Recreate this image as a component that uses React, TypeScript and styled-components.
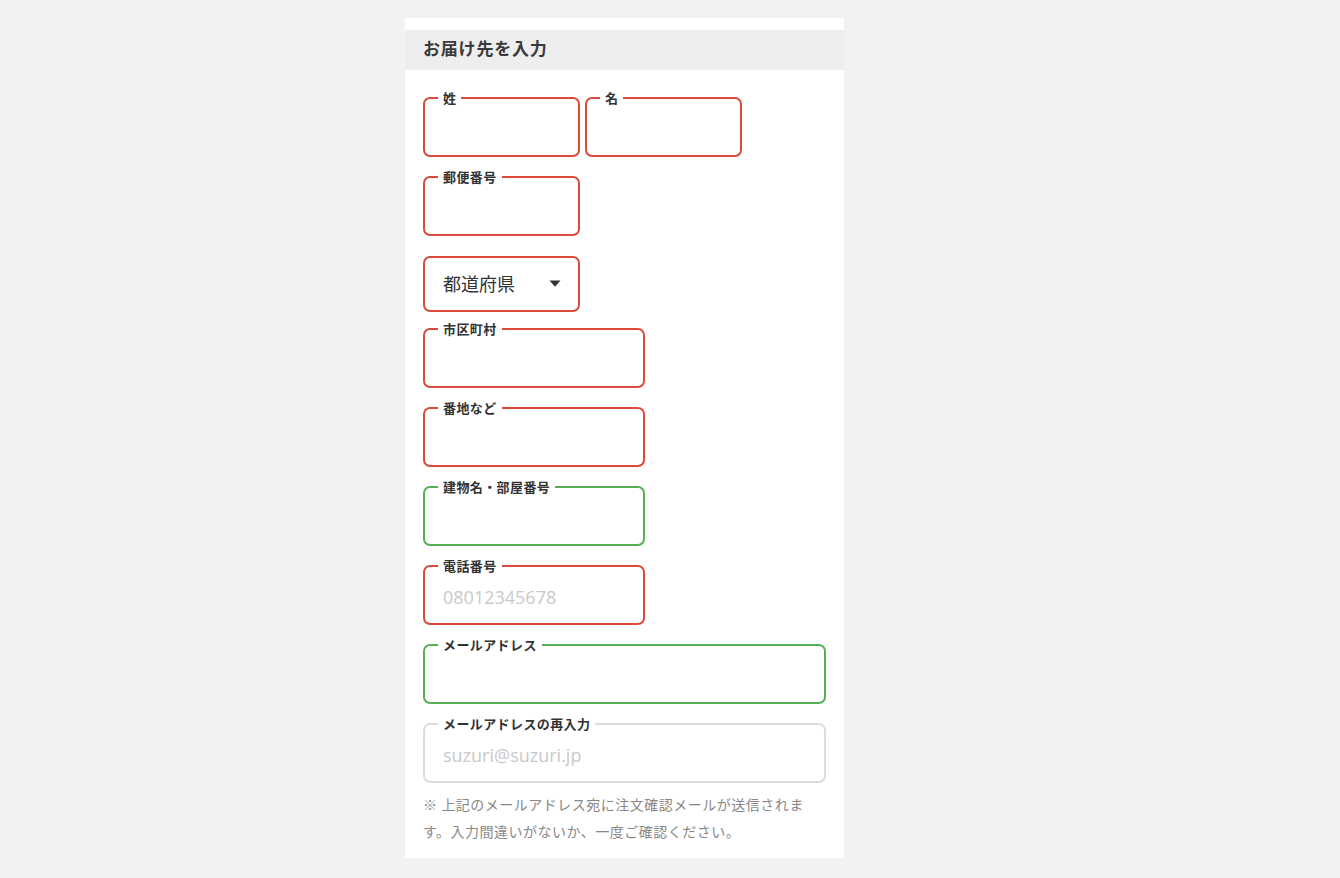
import styled, { createGlobalStyle } from 'styled-components';

const GlobalStyle = createGlobalStyle`
  html, body {
    margin: 0;
    padding: 0;
    background: #f2f2f2;
    font-family: "Noto Sans", "Open Sans", "Noto Sans CJK JP", sans-serif;
  }
`;

const RED = '#db4a3b';
const GREEN = '#55b055';
const GRAY = '#dcdcdc';

type Status = 'error' | 'ok' | 'idle';

const borderOf = (s: Status) => (s === 'error' ? RED : s === 'ok' ? GREEN : GRAY);

const Page = styled.div`
  min-height: 878px;
  padding: 18px 0 0 405px;
  box-sizing: border-box;
`;

const Panel = styled.section`
  width: 439px;
  background: #fff;
  padding-top: 12px;
  padding-bottom: 13px;
`;

const PanelHeader = styled.h2`
  margin: 0;
  height: 40px;
  box-sizing: border-box;
  display: flex;
  align-items: center;
  padding: 0 18px 6px;
  background: #eeeeee;
  font-family: "Noto Sans CJK JP", sans-serif;
  font-size: 17px;
  font-weight: 700;
  letter-spacing: 0.8px;
  color: #3a3a3a;
`;

const Form = styled.form`
  display: flex;
  flex-direction: column;
  gap: 13px;
  padding: 21px 18px 0;
`;

const Row = styled.div`
  display: flex;
  gap: 5px;
`;

const Field = styled.fieldset<{ $status: Status; $width: number }>`
  margin: 0;
  padding: 0 13px;
  width: ${(p) => p.$width}px;
  box-sizing: border-box;
  border: 2px solid ${(p) => borderOf(p.$status)};
  border-radius: 7px;
  min-inline-size: 0;
`;

const Legend = styled.legend`
  padding: 0 5px;
  font-family: "Noto Sans CJK JP", sans-serif;
  font-size: 13px;
  line-height: 14px;
  font-weight: 700;
  letter-spacing: 0.4px;
  color: #333;
`;

const Input = styled.input`
  display: block;
  width: 100%;
  height: 48px;
  margin-bottom: 2px;
  padding: 0 5px;
  box-sizing: border-box;
  border: none;
  outline: none;
  background: transparent;
  font-family: "Open Sans", "Noto Sans CJK JP", sans-serif;
  font-size: 18px;
  color: #333;
  &::placeholder {
    color: #c9c9c9;
  }
`;

const SelectBox = styled.div`
  width: 157px;
  height: 56px;
  margin: 7px 0 -3px;
  box-sizing: border-box;
  border: 2px solid ${RED};
  border-radius: 7px;
  display: flex;
  align-items: center;
  justify-content: space-between;
  padding: 0 17px 2px 18px;
  font-family: "Noto Sans CJK JP", sans-serif;
  font-size: 18px;
  color: #333;
`;

const Footnote = styled.div`
  padding: 0 18px;
`;

const Note = styled.p`
  margin: 8px 0 0;
  font-family: "Noto Sans CJK JP", sans-serif;
  font-size: 14px;
  line-height: 27px;
  letter-spacing: 0.5px;
  color: #888;
`;

const Caret = () => (
  <svg width="12" height="7" viewBox="0 0 12 7">
    <path d="M0.5 0.5 H11.5 L6 6.8 Z" fill="#333" />
  </svg>
);

type TextFieldProps = {
  label: string;
  status: Status;
  width: number;
  placeholder?: string;
};

const TextField = ({ label, status, width, placeholder }: TextFieldProps) => (
  <Field $status={status} $width={width}>
    <Legend>{label}</Legend>
    <Input placeholder={placeholder} />
  </Field>
);

const App = () => (
  <Page>
    <GlobalStyle />
    <Panel>
      <PanelHeader>お届け先を入力</PanelHeader>
      <Form onSubmit={(e) => e.preventDefault()}>
        <Row>
          <TextField label="姓" status="error" width={157} />
          <TextField label="名" status="error" width={157} />
        </Row>
        <TextField label="郵便番号" status="error" width={157} />
        <SelectBox>
          <span>都道府県</span>
          <Caret />
        </SelectBox>
        <TextField label="市区町村" status="error" width={222} />
        <TextField label="番地など" status="error" width={222} />
        <TextField label="建物名・部屋番号" status="ok" width={222} />
        <TextField label="電話番号" status="error" width={222} placeholder="08012345678" />
        <TextField label="メールアドレス" status="ok" width={403} />
        <TextField label="メールアドレスの再入力" status="idle" width={403} placeholder="suzuri@suzuri.jp" />
      </Form>
      <Footnote>
        <Note>※ 上記のメールアドレス宛に注文確認メールが送信されます。入力間違いがないか、一度ご確認ください。</Note>
      </Footnote>
    </Panel>
  </Page>
);

export default App;
